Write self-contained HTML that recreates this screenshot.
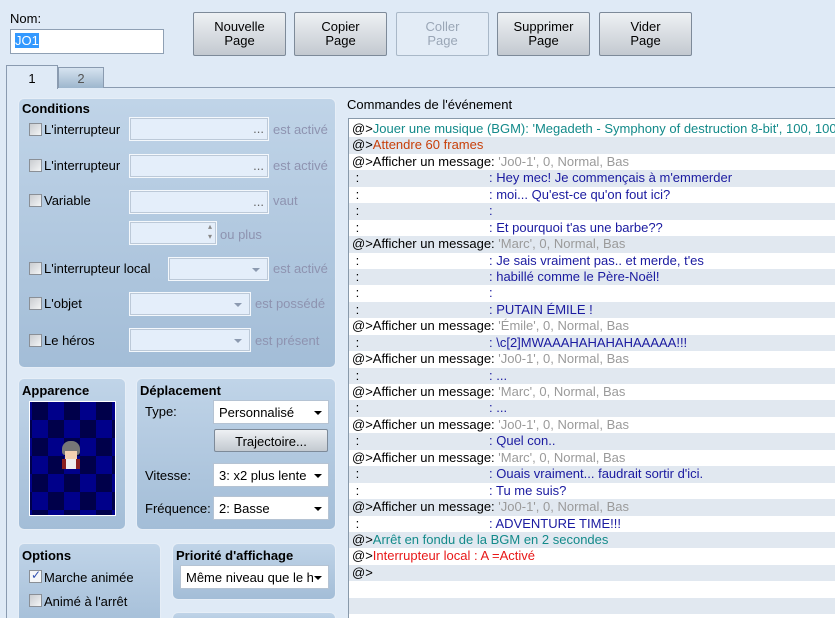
<!DOCTYPE html>
<html><head><meta charset="utf-8"><style>
*{box-sizing:border-box}
html,body{margin:0;width:835px;height:618px;overflow:hidden}
body{background:#dfeaf6;font-family:"Liberation Sans",sans-serif;font-size:13px;color:#000;position:relative}
.a{position:absolute}
.btn{position:absolute;top:12px;width:93px;height:44px;border:1px solid #7d8a99;border-radius:2px;background:linear-gradient(#eef1f4,#c3c9d0);text-align:center;font-size:13px;line-height:14px;padding-top:7px}
.btn.dis{background:#e3ecf6;border-color:#a9b8c8;color:#9aa6b6}
.grp{position:absolute;border:1px solid #e6eef7;border-radius:6px;background:linear-gradient(#c0d4e8,#a3bdd7)}
.gt{position:absolute;font-weight:bold;font-size:13px}
.cb{position:absolute;width:13px;height:13px;border:1px solid #8a8f96;background:linear-gradient(135deg,#c9ccd0,#f4f5f6)}
.fld{position:absolute;height:24px;background:#e4eefa;border:1px solid #f4f8fc;box-shadow:0 0 0 1px #bcc9d8 inset}
.gray{position:absolute;color:#8e93b0}
.sel{position:absolute;height:24px;background:#fff;border:1px solid #b5c3d3;padding:4px 0 0 5px;font-size:13px;overflow:hidden;white-space:nowrap}
.sel:after{content:"";position:absolute;right:6px;top:10px;border-left:4px solid transparent;border-right:4px solid transparent;border-top:4px solid #000}
.dd:after{content:"";position:absolute;right:8px;top:10px;border-left:4px solid transparent;border-right:4px solid transparent;border-top:4px solid #8c9ab0}
#list{position:absolute;left:348px;top:118px;width:490px;height:505px;border:1px solid #8899aa;background:#fff;overflow:hidden;padding-top:2px}
.r{height:16.45px;line-height:16px;white-space:nowrap;padding-left:3px;position:relative}
.r:nth-child(even){background:#e1e8f0}
.c1{display:inline-block;width:137px}
.msg{color:#1a1aa0}
.g{color:#9a9a9a}
</style></head><body>
<div class="a" style="left:10px;top:11px">Nom:</div>
<div class="a" style="left:10px;top:29px;width:154px;height:25px;background:#fff;border:1px solid #8fa0b4;padding:3px 0 0 4px"><span style="background:#3399ff;color:#fff">JO1</span></div>
<div class="btn" style="left:193px">Nouvelle<br>Page</div>
<div class="btn" style="left:294px">Copier<br>Page</div>
<div class="btn dis" style="left:396px">Coller<br>Page</div>
<div class="btn" style="left:497px">Supprimer<br>Page</div>
<div class="btn" style="left:599px">Vider<br>Page</div>

<div class="a" style="left:6px;top:87px;width:829px;height:531px;background:#dfeaf6;border-left:1px solid #8a9bb0;border-top:1px solid #8a9bb0"></div>
<div class="a" style="left:6px;top:65px;width:52px;height:24px;background:#dfeaf6;border:1px solid #8a9bb0;border-bottom:none;text-align:center;padding-top:5px">1</div>
<div class="a" style="left:58px;top:67px;width:46px;height:21px;background:linear-gradient(#d6e3f0,#9db6cd);border:1px solid #8a9bb0;border-bottom:none;text-align:center;padding-top:3px;color:#555">2</div>

<div class="grp" style="left:18px;top:98px;width:318px;height:270px"></div>
<div class="gt" style="left:22px;top:101px">Conditions</div>
<div class="cb" style="left:29px;top:123px"></div><div class="a" style="left:44px;top:122px">L'interrupteur</div>
<div class="fld" style="left:129px;top:117px;width:140px"><span class="a" style="right:4px;top:3px;color:#666">...</span></div><div class="gray" style="left:273px;top:122px">est activé</div>
<div class="cb" style="left:29px;top:159px"></div><div class="a" style="left:44px;top:158px">L'interrupteur</div>
<div class="fld" style="left:129px;top:154px;width:140px"><span class="a" style="right:4px;top:3px;color:#666">...</span></div><div class="gray" style="left:273px;top:158px">est activé</div>
<div class="cb" style="left:29px;top:194px"></div><div class="a" style="left:44px;top:193px">Variable</div>
<div class="fld" style="left:129px;top:190px;width:140px"><span class="a" style="right:4px;top:3px;color:#666">...</span></div><div class="gray" style="left:273px;top:193px">vaut</div>
<div class="fld" style="left:129px;top:221px;width:88px"><span class="a" style="right:4px;top:0;color:#888;font-size:8px;line-height:10px">▴<br>▾</span></div><div class="gray" style="left:220px;top:227px">ou plus</div>
<div class="cb" style="left:29px;top:262px"></div><div class="a" style="left:44px;top:261px">L'interrupteur local</div>
<div class="fld dd" style="left:168px;top:257px;width:101px"></div><div class="gray" style="left:273px;top:261px">est activé</div>
<div class="cb" style="left:29px;top:297px"></div><div class="a" style="left:44px;top:296px">L'objet</div>
<div class="fld dd" style="left:129px;top:292px;width:122px"></div><div class="gray" style="left:255px;top:296px">est possédé</div>
<div class="cb" style="left:29px;top:334px"></div><div class="a" style="left:44px;top:333px">Le héros</div>
<div class="fld dd" style="left:129px;top:328px;width:122px"></div><div class="gray" style="left:255px;top:333px">est présent</div>

<div class="grp" style="left:18px;top:378px;width:108px;height:152px"></div>
<div class="gt" style="left:22px;top:383px">Apparence</div>
<div class="a" style="left:29px;top:401px;width:87px;height:115px;border:1px solid #fff;background-color:#000060;background-image:conic-gradient(#00008a 25%,#00004a 0 50%,#00008a 0 75%,#00004a 0);background-size:32px 36px;background-position:2px 0"></div>
<div class="a" style="left:62px;top:441px;width:18px;height:14px;background:#777;border-radius:8px 8px 3px 3px"></div>
<div class="a" style="left:65px;top:451px;width:12px;height:8px;background:#f3d0b0"></div>
<div class="a" style="left:62px;top:459px;width:18px;height:10px;background:#b03a3a;border-left:4px solid #8a2020;border-right:4px solid #8a2020"></div>
<div class="a" style="left:66px;top:459px;width:10px;height:10px;background:#eee"></div>

<div class="grp" style="left:136px;top:378px;width:200px;height:152px"></div>
<div class="gt" style="left:140px;top:383px">Déplacement</div>
<div class="a" style="left:145px;top:404px">Type:</div>
<div class="sel" style="left:213px;top:400px;width:116px">Personnalisé</div>
<div class="a" style="left:214px;top:429px;width:114px;height:23px;border:1px solid #7d8a99;border-radius:2px;background:linear-gradient(#eef1f4,#c3c9d0);text-align:center;padding-top:4px">Trajectoire...</div>
<div class="a" style="left:145px;top:468px">Vitesse:</div>
<div class="sel" style="left:213px;top:463px;width:116px">3: x2 plus lente</div>
<div class="a" style="left:145px;top:501px">Fréquence:</div>
<div class="sel" style="left:213px;top:496px;width:116px">2: Basse</div>

<div class="grp" style="left:18px;top:543px;width:143px;height:90px"></div>
<div class="gt" style="left:22px;top:548px">Options</div>
<div class="cb" style="left:29px;top:570px;background:#f4f6f8"><span class="a" style="left:1px;top:-3px;color:#3050b0;font-size:12px">✓</span></div><div class="a" style="left:44px;top:570px">Marche animée</div>
<div class="cb" style="left:29px;top:594px"></div><div class="a" style="left:44px;top:594px">Animé à l'arrêt</div>

<div class="grp" style="left:172px;top:543px;width:164px;height:57px"></div>
<div class="gt" style="left:176px;top:548px">Priorité d'affichage</div>
<div class="sel" style="left:180px;top:565px;width:149px;padding-right:20px">Même niveau que le h</div>
<div class="grp" style="left:172px;top:612px;width:164px;height:20px"></div>

<div class="a" style="left:347px;top:97px">Commandes de l'événement</div>
<div id="list">
<div class="r" style="color:#138a8a"><span style="color:#000">@&gt;</span>Jouer une musique (BGM): 'Megadeth - Symphony of destruction 8-bit', 100, 100</div>
<div class="r" style="color:#c8400a"><span style="color:#000">@&gt;</span>Attendre 60 frames</div>
<div class="r">@&gt;Afficher un message: <span class="g">'Jo0-1', 0, Normal, Bas</span></div>
<div class="r"><span class="c1">&nbsp;:</span><span class="msg">: Hey mec! Je commençais à m'emmerder</span></div>
<div class="r"><span class="c1">&nbsp;:</span><span class="msg">: moi... Qu'est-ce qu'on fout ici?</span></div>
<div class="r"><span class="c1">&nbsp;:</span><span class="msg">:</span></div>
<div class="r"><span class="c1">&nbsp;:</span><span class="msg">: Et pourquoi t'as une barbe??</span></div>
<div class="r">@&gt;Afficher un message: <span class="g">'Marc', 0, Normal, Bas</span></div>
<div class="r"><span class="c1">&nbsp;:</span><span class="msg">: Je sais vraiment pas.. et merde, t'es</span></div>
<div class="r"><span class="c1">&nbsp;:</span><span class="msg">: habillé comme le Père-Noël!</span></div>
<div class="r"><span class="c1">&nbsp;:</span><span class="msg">:</span></div>
<div class="r"><span class="c1">&nbsp;:</span><span class="msg">: PUTAIN ÉMILE !</span></div>
<div class="r">@&gt;Afficher un message: <span class="g">'Émile', 0, Normal, Bas</span></div>
<div class="r"><span class="c1">&nbsp;:</span><span class="msg">: \c[2]MWAAAHAHAHAHAAAAA!!!</span></div>
<div class="r">@&gt;Afficher un message: <span class="g">'Jo0-1', 0, Normal, Bas</span></div>
<div class="r"><span class="c1">&nbsp;:</span><span class="msg">: ...</span></div>
<div class="r">@&gt;Afficher un message: <span class="g">'Marc', 0, Normal, Bas</span></div>
<div class="r"><span class="c1">&nbsp;:</span><span class="msg">: ...</span></div>
<div class="r">@&gt;Afficher un message: <span class="g">'Jo0-1', 0, Normal, Bas</span></div>
<div class="r"><span class="c1">&nbsp;:</span><span class="msg">: Quel con..</span></div>
<div class="r">@&gt;Afficher un message: <span class="g">'Marc', 0, Normal, Bas</span></div>
<div class="r"><span class="c1">&nbsp;:</span><span class="msg">: Ouais vraiment... faudrait sortir d'ici.</span></div>
<div class="r"><span class="c1">&nbsp;:</span><span class="msg">: Tu me suis?</span></div>
<div class="r">@&gt;Afficher un message: <span class="g">'Jo0-1', 0, Normal, Bas</span></div>
<div class="r"><span class="c1">&nbsp;:</span><span class="msg">: ADVENTURE TIME!!!</span></div>
<div class="r" style="color:#138a8a"><span style="color:#000">@&gt;</span>Arrêt en fondu de la BGM en 2 secondes</div>
<div class="r" style="color:#e81818"><span style="color:#000">@&gt;</span>Interrupteur local : A =Activé</div>
<div class="r">@&gt;</div>
<div class="r"></div>
<div class="r"></div>
<div class="r"></div>
</div>
</body></html>
